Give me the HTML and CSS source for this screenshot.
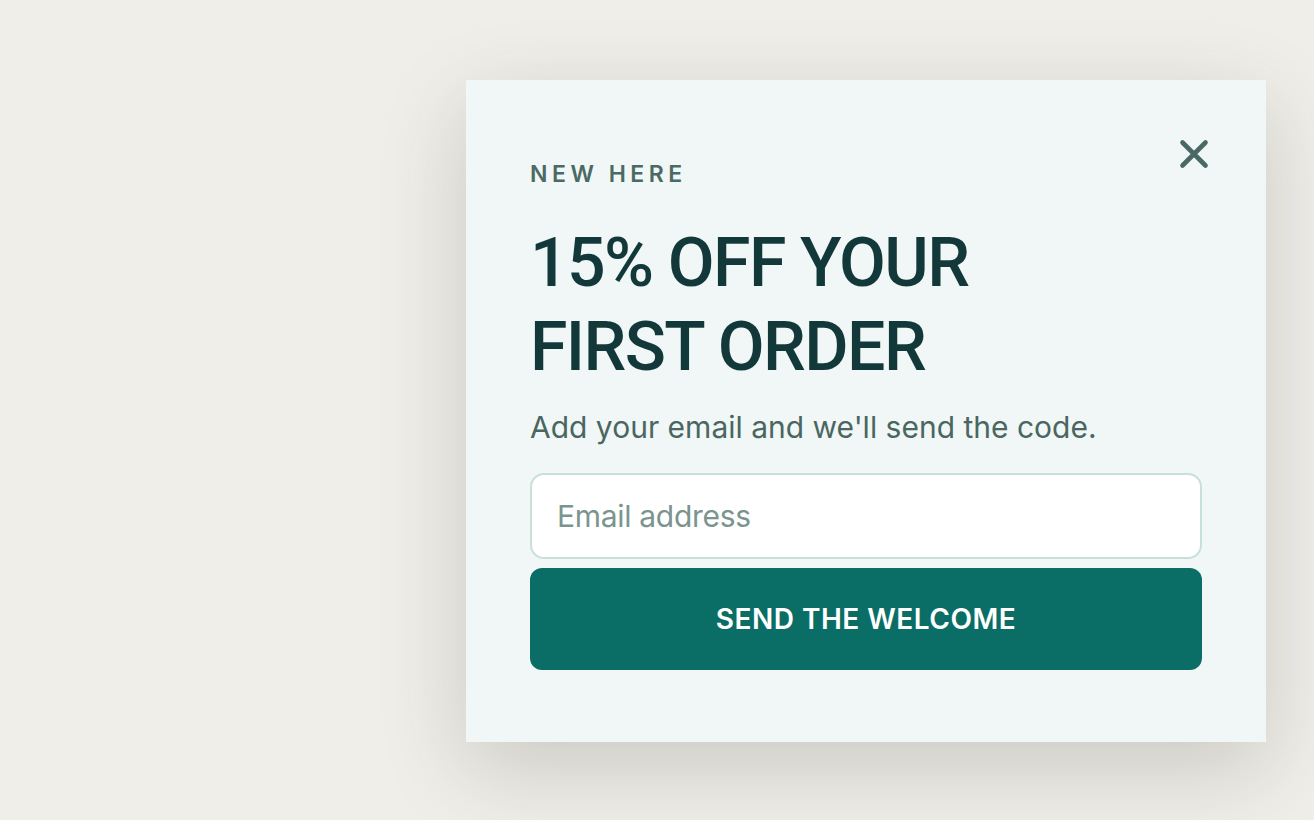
FILE: index.html
```html
<!DOCTYPE html>
<html lang="en">

<head>
    <meta charset="utf-8">
    <meta name="viewport" content="width=device-width, initial-scale=1">
    <title>Welcome Offer</title>
    <link rel="stylesheet" href="styles.css">
</head>

<body>
    <div class="popup">
        <button class="close-button" type="button" aria-label="Close">
            <svg width="30" height="30" viewBox="0 0 30 30">
                <path d="M3.5 3.5 L26.5 26.5 M26.5 3.5 L3.5 26.5" stroke="#4a6864" stroke-width="4.6" stroke-linecap="round" fill="none"/>
            </svg>
        </button>

        <p class="eyebrow">NEW HERE</p>
        <h1 class="headline">15% OFF YOUR<br>FIRST ORDER</h1>
        <p class="subtitle">Add your email and we'll send the code.</p>

        <form class="signup-form">
            <input type="email" class="email-input" placeholder="Email address">
            <button type="button" class="send-button">SEND THE WELCOME</button>
        </form>
    </div>
</body>

</html>
```

FILE: styles.css
```css
body {
    font-family: 'Inter', 'Noto Sans', sans-serif;
    background-color: #efeee9;
    margin: 0;
    padding: 80px 48px 0 0;
    height: 100vh;
    box-sizing: border-box;
    display: flex;
    align-items: flex-start;
    justify-content: flex-end;
}

.popup {
    position: relative;
    width: 800px;
    box-sizing: border-box;
    background-color: #f1f7f6;
    padding: 78px 64px 72px 64px;
    box-shadow: 0 26px 80px rgba(60, 55, 40, 0.20);
}

/* close icon sits over the top right corner of the card */
.close-button {
    position: absolute;
    top: 59px;
    right: 57px;
    width: 30px;
    height: 30px;
    padding: 0;
    border: none;
    background: none;
    cursor: pointer;
}

.close-button svg {
    display: block;
}

.eyebrow {
    margin: 0;
    font-size: 23px;
    line-height: 32px;
    font-weight: 600;
    letter-spacing: 4.5px;
    color: #4a6a63;
}

.headline {
    margin: 31px 0 0 0;
    font-family: 'Roboto', 'Inter', sans-serif;
    font-size: 68px;
    line-height: 84px;
    font-weight: 500;
    letter-spacing: -1.6px;
    color: #12383a;
}

.subtitle {
    margin: 18px 0 0 0;
    font-size: 30px;
    line-height: 40px;
    font-weight: 400;
    color: #4a6661;
}

.signup-form {
    margin-top: 26px;
    display: flex;
    flex-direction: column;
    gap: 9px;
}

.email-input {
    height: 86px;
    box-sizing: border-box;
    border: 2px solid #c8e0dc;
    border-radius: 14px;
    background-color: white;
    padding: 0 25px;
    font-family: inherit;
    font-size: 30px;
    letter-spacing: -0.3px;
    color: #12383a;
    outline: none;
}

.email-input::placeholder {
    color: #7a948f;
}

.send-button {
    height: 102px;
    border: none;
    border-radius: 12px;
    background-color: #0a6e66;
    color: white;
    font-family: inherit;
    font-size: 28px;
    font-weight: 600;
    letter-spacing: 0.5px;
    cursor: pointer;
}
```
